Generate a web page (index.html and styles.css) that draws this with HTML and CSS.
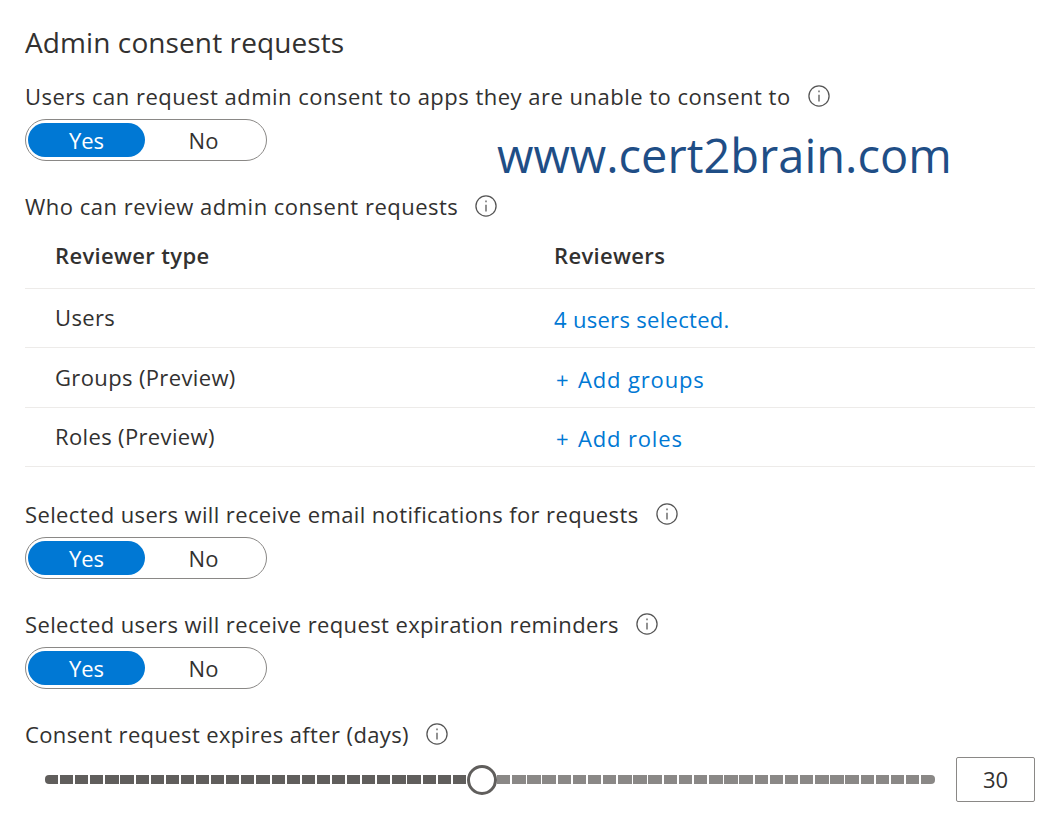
FILE: index.html
```html
<!DOCTYPE html>
<html lang="en">
<head>
    <meta charset="UTF-8">
    <title>Admin consent requests</title>
    <link rel="stylesheet" href="styles.css">
</head>
<body>
    <div class="page">
        <h1 class="title">Admin consent requests</h1>

        <div class="label label-first">Users can request admin consent to apps they are unable to consent to
            <svg class="info" viewBox="0 0 24 24"><circle cx="12" cy="12" r="11" /><line x1="12" y1="10.5" x2="12" y2="18" /><line x1="12" y1="6" x2="12" y2="8" /></svg>
        </div>
        <div class="toggle"><span class="toggle-on">Yes</span><span class="toggle-off">No</span></div>

        <div class="label label-review">Who can review admin consent requests
            <svg class="info" viewBox="0 0 24 24"><circle cx="12" cy="12" r="11" /><line x1="12" y1="10.5" x2="12" y2="18" /><line x1="12" y1="6" x2="12" y2="8" /></svg>
        </div>

        <div class="table">
            <div class="row row-head"><div class="cell-type">Reviewer type</div><div>Reviewers</div></div>
            <div class="row"><div class="cell-type">Users</div><a class="link">4 users selected.</a></div>
            <div class="row"><div class="cell-type">Groups (Preview)</div><a class="link link-add"><span class="plus">+</span>Add groups</a></div>
            <div class="row"><div class="cell-type">Roles (Preview)</div><a class="link link-add"><span class="plus">+</span>Add roles</a></div>
        </div>

        <div class="label label-email">Selected users will receive email notifications for requests
            <svg class="info" viewBox="0 0 24 24"><circle cx="12" cy="12" r="11" /><line x1="12" y1="10.5" x2="12" y2="18" /><line x1="12" y1="6" x2="12" y2="8" /></svg>
        </div>
        <div class="toggle"><span class="toggle-on">Yes</span><span class="toggle-off">No</span></div>

        <div class="label label-next">Selected users will receive request expiration reminders
            <svg class="info" viewBox="0 0 24 24"><circle cx="12" cy="12" r="11" /><line x1="12" y1="10.5" x2="12" y2="18" /><line x1="12" y1="6" x2="12" y2="8" /></svg>
        </div>
        <div class="toggle"><span class="toggle-on">Yes</span><span class="toggle-off">No</span></div>

        <div class="label label-next">Consent request expires after (days)
            <svg class="info" viewBox="0 0 24 24"><circle cx="12" cy="12" r="11" /><line x1="12" y1="10.5" x2="12" y2="18" /><line x1="12" y1="6" x2="12" y2="8" /></svg>
        </div>
        <div class="slider-row">
            <div class="slider">
                <div class="track track-done"></div>
                <div class="thumb"></div>
                <div class="track track-left"></div>
            </div>
            <div class="days">30</div>
        </div>
    </div>

    <div class="watermark">www.cert2brain.com</div>
</body>
</html>
```

FILE: styles.css
```css
body {
    margin: 0;
    background: #fff;
    color: #323130;
    font-family: "Open Sans", "Noto Sans", sans-serif;
    font-size: 22px;
    overflow: hidden;
}

.page {
    width: 1010px;
    margin-left: 25px;
    padding-top: 23px;
}

.title {
    margin: 0;
    font-size: 28px;
    font-weight: 400;
    line-height: 38px;
    letter-spacing: 0.1px;
}

.label {
    display: flex;
    align-items: center;
    gap: 17px;
    height: 30px;
    line-height: 30px;
    letter-spacing: 0.38px;
}

.label-first { margin-top: 20px; letter-spacing: 0.49px; }
.label-review { margin-top: 30px; letter-spacing: 0.49px; }
.label-email { margin-top: 32px; }
.label-next { margin-top: 30px; }

.info {
    width: 22px;
    height: 22px;
    fill: none;
    stroke: #555;
    stroke-width: 1.4;
}

.toggle {
    display: flex;
    align-items: center;
    box-sizing: border-box;
    width: 242px;
    height: 42px;
    margin-top: 8px;
    padding: 0 2px;
    border: 1px solid #8a8886;
    border-radius: 21px;
}

.toggle-on, .toggle-off {
    height: 34px;
    line-height: 34px;
    text-align: center;
}

.toggle-on {
    width: 117px;
    background: #0078d4;
    color: #fff;
    border-radius: 17px;
}

.toggle-off {
    width: 117px;
}

.table {
    margin-top: 2px;
}

.row {
    display: flex;
    align-items: center;
    box-sizing: border-box;
    height: 59.4px;
    border-bottom: 1px solid #edebe9;
    letter-spacing: 0.36px;
}

.row-head {
    height: 66px;
    padding-bottom: 2px;
    font-weight: 600;
    letter-spacing: 0.35px;
}

.cell-type {
    width: 499px;
    padding-left: 30px;
    padding-bottom: 2px;
    box-sizing: content-box;
}

.row-head .cell-type {
    padding-bottom: 0;
}

.link {
    color: #0078d4;
    letter-spacing: 0.3px;
    padding-top: 2px;
}

.link-add {
    display: flex;
    padding-left: 2px;
    letter-spacing: 0.85px;
}

.plus {
    width: 22px;
}

.slider-row {
    display: flex;
    align-items: center;
    margin-top: 8px;
}

.slider {
    display: flex;
    align-items: center;
    width: 890px;
    margin-left: 20px;
    margin-right: 21px;
}

.track {
    height: 9px;
}

.track-done {
    width: 422px;
    border-radius: 4px 0 0 4px;
    background: repeating-linear-gradient(90deg, #605e5c 0, #605e5c 13.2px, #fff 13.2px, #fff 15.1px);
}

.track-left {
    width: 438px;
    border-radius: 0 4px 4px 0;
    background: repeating-linear-gradient(90deg, #8a8886 0, #8a8886 13.4px, #fff 13.4px, #fff 15.15px);
}

.thumb {
    box-sizing: border-box;
    flex-shrink: 0;
    width: 30px;
    height: 30px;
    background: #fff;
    border: 3px solid #605e5c;
    border-radius: 50%;
}

.days {
    box-sizing: border-box;
    width: 79px;
    height: 45px;
    line-height: 43px;
    text-align: center;
    border: 1px solid #8a8886;
    border-radius: 2px;
}

.watermark {
    position: absolute;
    left: 497px;
    top: 125px;
    color: #1f4e86;
    font-size: 47px;
    line-height: 60px;
    white-space: nowrap;
}
```
